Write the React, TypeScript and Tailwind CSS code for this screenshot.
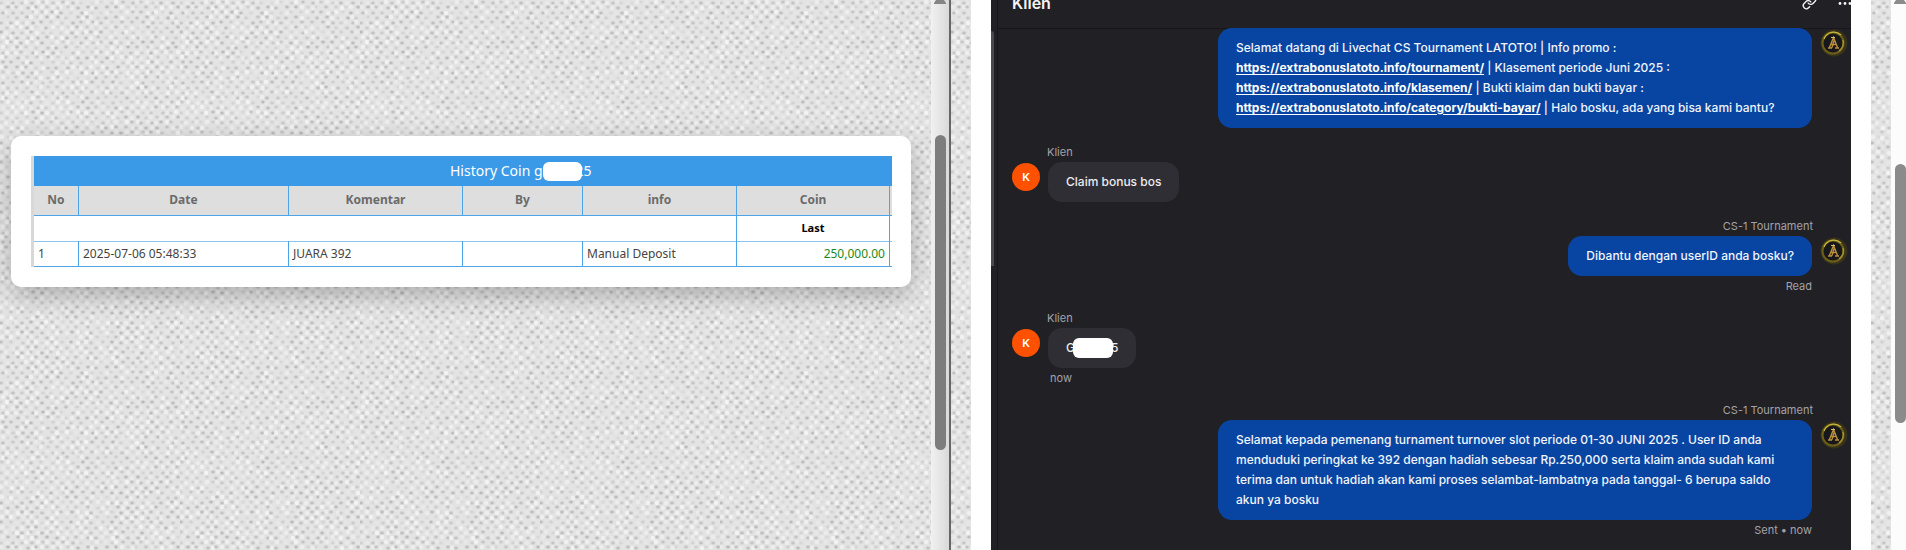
import type { ReactNode } from "react";
import { Link } from "lucide-react";

interface Dot {
  x: number;
  y: number;
  shade: number;
  dark: boolean;
}

function noise(x: number, y: number) {
  let h = Math.imul(x + 11, 374761393) ^ Math.imul(y + 5, 668265263);
  h = Math.imul(h ^ (h >>> 13), 1274126177);
  return ((h ^ (h >>> 16)) >>> 0) / 4294967296;
}

// Paper grain: staggered dots with uneven darkness
function buildGrain(size: number, step: number): Dot[] {
  const dots: Dot[] = [];
  for (let y = 0; y < size; y += step) {
    for (let x = 0; x < size; x += step) {
      const shiftX = Math.floor(noise(y, x + 3) * 3);
      const shiftY = Math.floor(noise(x + 9, y) * 2);
      dots.push({ x: x + 1 + shiftX, y: y + 2 + shiftY, shade: noise(x, y), dark: (x + y) % (step * 2) === 0 });
    }
  }
  return dots;
}

const grain = buildGrain(180, 5);

function Texture({ id }: { id: string }) {
  return (
    <svg className="absolute inset-0 h-full w-full" aria-hidden="true">
      <defs>
        <pattern id={id} width="180" height="180" patternUnits="userSpaceOnUse">
          <rect width="180" height="180" fill="#e3e3e3" />
          {grain.map((dot, i) =>
            dot.dark ? (
              <g key={i} opacity={0.06 + dot.shade * 0.2}>
                <ellipse cx={dot.x} cy={dot.y} rx="2.5" ry="1.8" fill="#888" />
                <circle cx={dot.x} cy={dot.y} r="1.2" fill="#444" />
              </g>
            ) : (
              <circle key={i} cx={dot.x} cy={dot.y} r="2.2" fill="#fff" opacity={dot.shade * 0.6} />
            )
          )}
        </pattern>
      </defs>
      <rect width="100%" height="100%" fill={`url(#${id})`} />
    </svg>
  );
}

function GoldAvatar() {
  return (
    <svg viewBox="0 0 28 28" className="mt-px size-7 shrink-0" role="img" aria-label="CS-1 Tournament">
      <circle cx="14" cy="14" r="13.5" fill="#37321a" />
      <circle cx="13" cy="14" r="10.5" fill="#18181a" stroke="#6d5f18" strokeWidth="2" />
      <path d="M4 10a10.500 10.500 0 0 1 17-4" fill="none" stroke="#c9b53e" strokeWidth="1.2" />
      <path d="M23 11a10.500 10.500 0 0 1-4 11" fill="none" stroke="#a8922c" strokeWidth="1.4" />
      <path d="M8 19h4M15 19h4M9.500 18.500l4-10 4 10M11.500 15.500h4M12 18.500l2-7" fill="none" stroke="#b98f3c" strokeWidth="1.4" />
      <path d="M11 8.500h4" stroke="#e0bd62" strokeWidth="1" />
    </svg>
  );
}

interface MessageProps {
  side: "client" | "agent";
  author?: string;
  status?: string;
  children: ReactNode;
}

function Message({ side, author, status, children }: MessageProps) {
  if (side === "client") {
    return (
      <div className="flex flex-col items-start">
        {author && <span className="mb-0.5 ml-[35px] text-[11px] leading-4 text-[#a3a3a8]">{author}</span>}
        <div className="flex items-start gap-2">
          <span className="mt-px flex size-7 items-center justify-center rounded-full bg-[#ff5100] text-[11px] font-semibold text-white">
            K
          </span>
          <div className="flex min-h-10 items-center rounded-[14px] bg-[#2f2e34] px-[18px] py-2.5 text-xs leading-5 font-medium text-[#ececee]">
            {children}
          </div>
        </div>
        {status && <span className="mt-0.5 ml-[38px] text-[11px] leading-4 text-[#a3a3a8]">{status}</span>}
      </div>
    );
  }

  return (
    <div className="flex flex-col items-end">
      {author && <span className="mr-[35px] mb-0.5 text-[11px] leading-4 text-[#a3a3a8]">{author}</span>}
      <div className="flex items-start gap-2">
        <div className="flex min-h-10 max-w-[594px] items-center rounded-[14px] bg-[#0845a3] px-[18px] py-2.5 text-xs leading-5 font-medium text-[#f1f4fa]">
          {children}
        </div>
        <GoldAvatar />
      </div>
      {status && <span className="mt-0.5 mr-[36px] text-[11px] leading-4 text-[#a3a3a8]">{status}</span>}
    </div>
  );
}

function ChatLink({ path }: { path: string }) {
  const url = `https://extrabonuslatoto.info/${path}/`;
  return (
    <a href={url} className="font-bold text-white underline underline-offset-2">
      {url}
    </a>
  );
}

function HistoryTable() {
  const line = "border-l border-[#4ea4e8]";
  return (
    <table className="w-full table-fixed border-collapse border-l-3 border-l-[#d8d8d8] font-['Noto_Sans','Open_Sans',sans-serif] text-xs text-[#444]">
      <colgroup>
        <col className="w-[46px]" />
        <col className="w-[210px]" />
        <col className="w-[174px]" />
        <col className="w-[120px]" />
        <col className="w-[154px]" />
        <col className="w-[153px]" />
        <col className="w-[2px]" />
      </colgroup>
      <thead>
        <tr className="h-[30px] bg-[#3b9ae8] text-white">
          <th colSpan={7} className="pl-[116px] text-sm leading-5 font-normal">
            <span className="flex items-center justify-center">
              History Coin g
              <span className="z-10 -mr-1.5 h-[19px] w-[39px] rounded-md bg-white" />
              25
            </span>
          </th>
        </tr>
        <tr className="h-[29px] border-b border-[#4ea4e8] bg-[#dedede] leading-5 text-[#6b6b6b]">
          <th className={line}>No</th>
          <th className={line}>Date</th>
          <th className={line}>Komentar</th>
          <th className={line}>By</th>
          <th className={line}>info</th>
          <th className={line}>Coin</th>
          <td className={line} />
        </tr>
      </thead>
      <tbody>
        <tr className="h-[26px] border-b border-[#8cc4f0]">
          <td colSpan={5} className={line} />
          <td className={`${line} text-center text-[11px] leading-4 font-bold text-black`}>Last</td>
          <td className={line} />
        </tr>
        <tr className="h-[25px] border-b border-[#4ea4e8] leading-5">
          <td className={`${line} pl-1`}>1</td>
          <td className={`${line} pl-1`}>2025-07-06 05:48:33</td>
          <td className={`${line} pl-1`}>JUARA 392</td>
          <td className={line} />
          <td className={`${line} pl-1`}>Manual Deposit</td>
          <td className={`${line} pr-1 text-right text-[#1c8a1c]`}>250,000.00</td>
          <td className={line} />
        </tr>
      </tbody>
    </table>
  );
}

export default function App() {
  return (
    <div className="flex h-screen overflow-hidden bg-white font-[Inter,sans-serif]">
      <section className="relative min-w-0 flex-[900] pt-34 pr-5 pl-[11px]">
        <Texture id="grain-left" />
        <div className="relative rounded-[10px] bg-white p-5 shadow-[0_8px_24px_rgba(0,0,0,0.26)]">
          <HistoryTable />
        </div>
      </section>

      {/* Left scrollbar */}
      <div className="flex w-5 shrink-0 flex-col items-center border-r-2 border-[#666] bg-linear-to-r from-[#f1f1f1] to-[#d9d9d9]">
        <svg className="h-1 w-3 shrink-0" viewBox="0 0 12 4" aria-hidden="true">
          <path d="M2 0h8l2 3v1H0V3z" fill="#858585" />
        </svg>
        <div className="mt-[131px] h-[315px] w-[11px] rounded-full bg-[#7d7d7d]" />
      </div>

      <div className="relative w-5 shrink-0">
        <Texture id="grain-middle" />
      </div>

      <main className="mx-5 flex min-w-0 flex-[860] bg-[#212025]">
        <div className="w-[7px] shrink-0 border-r border-[#17161a] pt-[31px]">
          <div className="h-[235px] w-[3px] rounded-tr-sm bg-[#4a4950]" />
        </div>
        <div className="flex min-w-0 flex-1 flex-col">
          <header className="flex h-7 shrink-0 items-start justify-between overflow-hidden pl-3.5 text-[#f4f4f5] shadow-[0_1px_0_#17161a]">
            <h1 className="-mt-[9px] text-base leading-6 font-semibold">Klien</h1>
            <div className="-mt-[5px] flex gap-5">
              <button aria-label="Copy link">
                <Link size={15} strokeWidth={2.2} />
              </button>
              <button aria-label="More options">
                <svg width="14" height="14" viewBox="0 0 14 14" fill="currentColor">
                  <circle cx="3" cy="7.500" r="1.400" />
                  <circle cx="8" cy="7.500" r="1.400" />
                  <circle cx="13" cy="7.500" r="1.400" />
                </svg>
              </button>
            </div>
          </header>
          <div className="flex flex-1 flex-col gap-4 overflow-hidden pr-[3px] pl-3.5">
            <Message side="agent">
              <p>
                Selamat datang di Livechat CS Tournament LATOTO! | Info promo : <ChatLink path="tournament" /> |
                Klasement periode Juni 2025 : <ChatLink path="klasemen" /> | Bukti klaim dan bukti bayar :{" "}
                <ChatLink path="category/bukti-bayar" /> | Halo bosku, ada yang bisa kami bantu?
              </p>
            </Message>
            <Message side="client" author="Klien">
              Claim bonus bos
            </Message>
            <Message side="agent" author="CS-1 Tournament" status="Read">
              Dibantu dengan userID anda bosku?
            </Message>
            <Message side="client" author="Klien" status="now">
              G
              <span className="z-10 -mx-0.5 h-5 w-10 rounded-md bg-white" />5
            </Message>
            <Message side="agent" author="CS-1 Tournament" status="Sent • now">
              Selamat kepada pemenang turnament turnover slot periode 01-30 JUNI 2025 . User ID anda menduduki
              peringkat ke 392 dengan hadiah sebesar Rp.250,000 serta klaim anda sudah kami terima dan untuk hadiah
              akan kami proses selambat-lambatnya pada tanggal- 6 berupa saldo akun ya bosku
            </Message>
          </div>
        </div>
      </main>

      <div className="relative w-5 shrink-0">
        <Texture id="grain-right" />
      </div>

      {/* Right scrollbar */}
      <div className="flex w-[15px] shrink-0 flex-col items-end bg-[#fcfcfc]">
        <svg className="h-1 w-3 shrink-0" viewBox="0 0 12 4" aria-hidden="true">
          <path d="M2 0h8l2 3v1H0V3z" fill="#8b8b8b" />
        </svg>
        <div className="mt-40 h-[259px] w-[11px] rounded-full bg-[#8b8b8b]" />
      </div>
    </div>
  );
}
